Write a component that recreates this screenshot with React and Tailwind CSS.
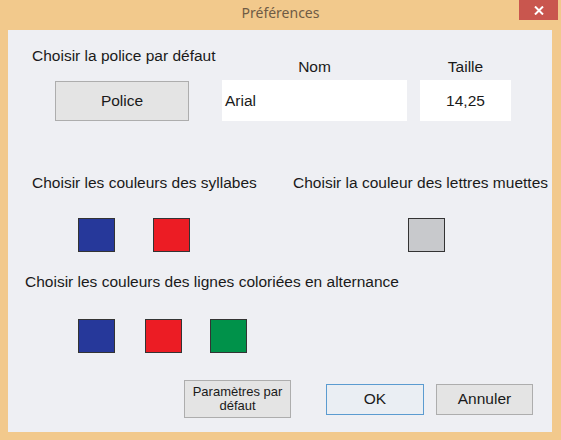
export default function App() {
  const swatch = "h-[34px] w-[37px] border border-[#333]";
  return (
    <div className="flex h-[440px] w-[561px] flex-col bg-[#f2c98c] font-['Liberation_Sans',Arial,sans-serif] text-[15.5px] text-[#1a1a1a]">
      {/* title bar */}
      <div className="relative flex h-[30px] items-center justify-center pb-[5px]">
        <span className="font-['Noto_Sans',sans-serif] text-[14px] text-[#6f5b45]">Préférences</span>
        <div className="absolute right-[3px] top-0 flex h-[20px] w-[39px] items-center justify-center bg-[#c9564e]">
          <svg width="10" height="9" viewBox="0 0 10 9">
            <path d="M1 0.5 L9 8.5 M9 0.5 L1 8.5" stroke="#fff" strokeWidth="2" />
          </svg>
        </div>
      </div>

      {/* client area */}
      <div className="mx-[8px] flex h-[402px] w-[544px] flex-col bg-[#eeeff3]">
        {/* font row */}
        <div className="flex items-end">
          <div className="flex w-[214px] flex-col">
            <div className="ml-[24px] mt-[17px] leading-[18px]">Choisir la police par défaut</div>
            <button className="ml-[47px] mt-[16px] h-[40px] w-[134px] border border-[#adadad] bg-[#e4e4e4] leading-[18px]">
              Police
            </button>
          </div>
          <div className="flex w-[185px] flex-col">
            <div className="pb-[4px] text-center leading-[18px]">Nom</div>
            <div className="flex h-[41px] items-center bg-white pl-[3px]">Arial</div>
          </div>
          <div className="ml-[13px] flex w-[91px] flex-col">
            <div className="pb-[4px] text-center leading-[18px]">Taille</div>
            <div className="flex h-[41px] items-center justify-center bg-white">14,25</div>
          </div>
        </div>

        {/* syllables / silent letters */}
        <div className="mt-[53px] flex leading-[18px]">
          <div className="ml-[24px] w-[261px]">Choisir les couleurs des syllabes</div>
          <div>Choisir la couleur des lettres muettes</div>
        </div>
        <div className="mt-[26px] flex">
          <div className={`ml-[70px] bg-[#26389a] ${swatch}`} />
          <div className={`ml-[38px] bg-[#ec1c24] ${swatch}`} />
          <div className={`ml-[218px] bg-[#c8c9cc] ${swatch}`} />
        </div>

        {/* alternating lines */}
        <div className="ml-[17px] mt-[21px] leading-[18px]">
          Choisir les couleurs des lignes coloriées en alternance
        </div>
        <div className="mt-[28px] flex">
          <div className={`ml-[70px] bg-[#26389a] ${swatch}`} />
          <div className={`ml-[30px] bg-[#ec1c24] ${swatch}`} />
          <div className={`ml-[28px] bg-[#00924a] ${swatch}`} />
        </div>

        {/* buttons */}
        <div className="mt-[27px] flex items-center">
          <button className="ml-[176px] flex h-[38px] w-[107px] flex-col items-center justify-center border border-[#adadad] bg-[#e4e4e4] text-[13px] leading-[14px]">
            <span>Paramètres par</span>
            <span>défaut</span>
          </button>
          <button className="ml-[35px] h-[31px] w-[98px] border border-[#5b9bd0] bg-[#eaeef3] leading-[18px]">
            OK
          </button>
          <button className="ml-[12px] h-[31px] w-[97px] border border-[#adadad] bg-[#e4e4e4] leading-[18px]">
            Annuler
          </button>
        </div>
      </div>
    </div>
  );
}
